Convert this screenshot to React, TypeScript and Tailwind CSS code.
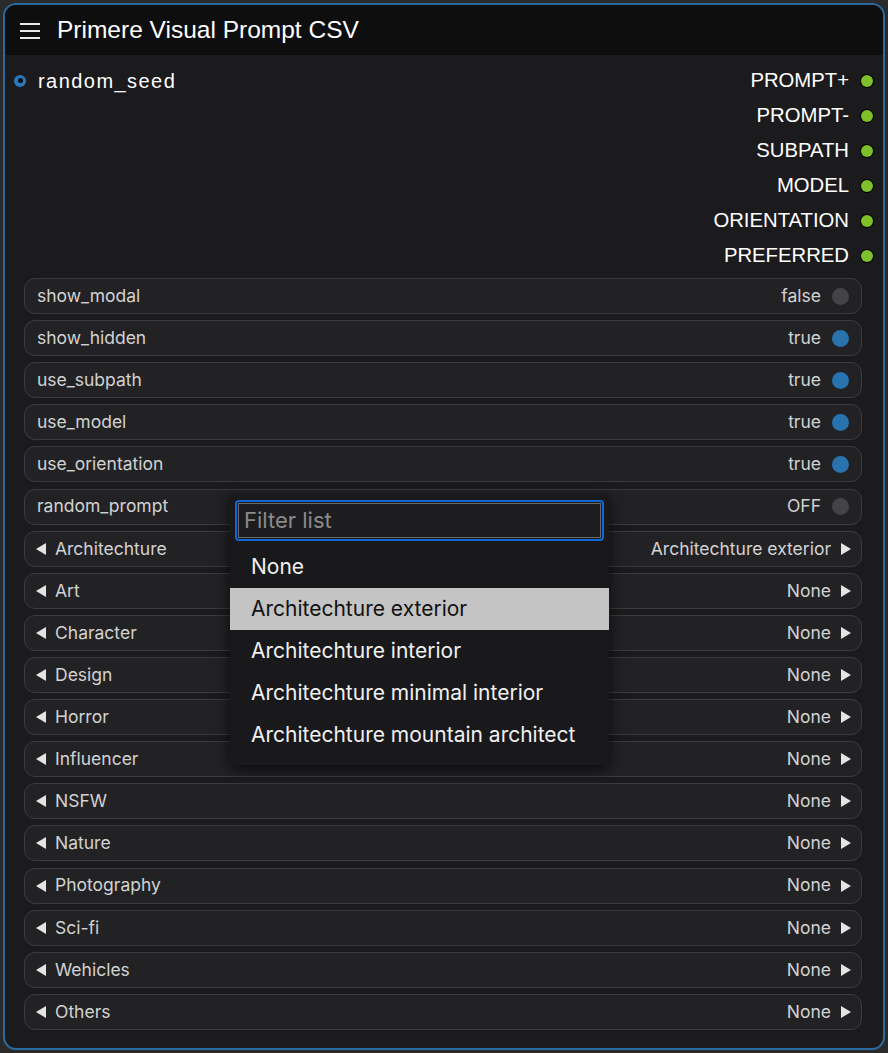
import React from 'react';

const outputs = ['PROMPT+', 'PROMPT-', 'SUBPATH', 'MODEL', 'ORIENTATION', 'PREFERRED'];

const toggles = [
  { name: 'show_modal', value: 'false', on: false },
  { name: 'show_hidden', value: 'true', on: true },
  { name: 'use_subpath', value: 'true', on: true },
  { name: 'use_model', value: 'true', on: true },
  { name: 'use_orientation', value: 'true', on: true },
  { name: 'random_prompt', value: 'OFF', on: false },
];

const combos = [
  { name: 'Architechture', value: 'Architechture exterior' },
  { name: 'Art', value: 'None' },
  { name: 'Character', value: 'None' },
  { name: 'Design', value: 'None' },
  { name: 'Horror', value: 'None' },
  { name: 'Influencer', value: 'None' },
  { name: 'NSFW', value: 'None' },
  { name: 'Nature', value: 'None' },
  { name: 'Photography', value: 'None' },
  { name: 'Sci-fi', value: 'None' },
  { name: 'Wehicles', value: 'None' },
  { name: 'Others', value: 'None' },
];

const options = [
  'None',
  'Architechture exterior',
  'Architechture interior',
  'Architechture minimal interior',
  'Architechture mountain architect',
];

const Widget = ({ children }: { children: React.ReactNode }) => (
  <div className="h-[36px] rounded-[11px] border border-[#3c3c3f] bg-[#222225] flex items-center justify-between text-[17.5px] text-[#d2d2d2] font-['Inter',sans-serif]">
    {children}
  </div>
);

const Arrow = ({ left }: { left?: boolean }) => (
  <svg width="10" height="12" viewBox="0 0 10 12">
    <polygon points={left ? '10,0 10,12 0,6' : '0,0 0,12 10,6'} fill="#e4e4e4" />
  </svg>
);

const App = () => {
  return (
    <div className="w-[888px] h-[1053px] bg-[#2a2a2a] p-[3px] relative font-['Liberation_Sans',Arial,sans-serif]">
      <div className="h-full rounded-[13px] border-2 border-[#2b6a9e] bg-[#1b1b1d] overflow-hidden flex flex-col">
        {/* title bar */}
        <div className="h-[50px] bg-[#0e0e0f] flex items-center pl-[15px] shrink-0">
          <svg width="21" height="18" viewBox="0 0 21 18" className="mr-[16px]">
            <rect x="0" y="2" width="20" height="2" fill="#e8e8e8" />
            <rect x="0" y="9" width="20" height="2" fill="#e8e8e8" />
            <rect x="0" y="16" width="20" height="2" fill="#e8e8e8" />
          </svg>
          <span className="text-white text-[24.5px] leading-none">Primere Visual Prompt CSV</span>
        </div>

        {/* slots */}
        <div className="flex justify-between pt-[8px] pl-[9px] pr-[10px]">
          <div className="flex items-start h-[35px]">
            <div className="flex items-center h-[35px] gap-[12px]">
              <span className="w-[12px] h-[12px] rounded-full bg-[#2a78b8] flex items-center justify-center">
                <span className="w-[5px] h-[5px] rounded-full bg-[#101012]" />
              </span>
              <span className="text-white text-[20px] tracking-[1.45px]">random_seed</span>
            </div>
          </div>
          <div className="flex flex-col items-end">
            {outputs.map((o) => (
              <div key={o} className="h-[35px] flex items-center gap-[12px]">
                <span className="text-white text-[20.3px]">{o}</span>
                <span className="w-[12px] h-[12px] rounded-full bg-[#7fbf2a] ring-1 ring-black" />
              </div>
            ))}
          </div>
        </div>

        {/* widgets */}
        <div className="flex flex-col gap-[6.12px] pt-[5px] pl-[19px] pr-[21px]">
          {toggles.map((t) => (
            <Widget key={t.name}>
              <span className="pl-[12px]">{t.name}</span>
              <span className="flex items-center gap-[11px] pr-[12px]">
                {t.value}
                <span className={`w-[17px] h-[17px] rounded-full ${t.on ? 'bg-[#2872ae]' : 'bg-[#444448]'}`} />
              </span>
            </Widget>
          ))}
          {combos.map((c) => (
            <Widget key={c.name}>
              <span className="flex items-center pl-[11px] gap-[9px]">
                <Arrow left />
                {c.name}
              </span>
              <span className="flex items-center pr-[10px] gap-[10px]">
                {c.value}
                <Arrow />
              </span>
            </Widget>
          ))}
        </div>
      </div>

      {/* context menu */}
      <div className="absolute left-[230px] top-[495px] w-[379px] bg-[#19191b] shadow-[0_4px_14px_rgba(0,0,0,0.7)] pt-[5px] pb-[9px] font-['Inter',sans-serif]">
        <div className="mx-[5px] h-[41px] rounded-[4px] border-2 border-[#1366d6] p-[1px]">
          <div className="h-full border border-[#6b6b6b] bg-[#1d1d1f] flex items-center px-[5px] text-[22px] text-[#8a8a8a]">
            Filter list
          </div>
        </div>
        <div className="mt-[5px] flex flex-col">
          {options.map((o, i) => (
            <div
              key={o}
              className={`h-[42px] flex items-center pl-[21px] text-[21px] ${i === 1 ? 'bg-[#c4c4c4] text-[#111]' : 'text-[#f0f0f0]'}`}
            >
              {o}
            </div>
          ))}
        </div>
      </div>
    </div>
  );
};

export default App;
